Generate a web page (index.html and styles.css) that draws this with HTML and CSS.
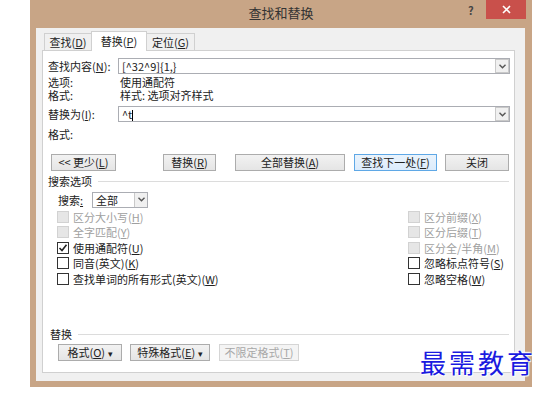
FILE: index.html
```html
<!DOCTYPE html>
<html lang="zh-CN">
<head>
    <meta charset="UTF-8">
    <title>查找和替换</title>
    <link rel="stylesheet" href="styles.css">
</head>
<body>
    <div class="window">
        <div class="titlebar">
            <span class="title">查找和替换</span>
            <span class="help">?</span>
            <span class="close">
                <svg width="9" height="9" viewBox="0 0 9 9"><path d="M1 1L8 8M8 1L1 8" stroke="#fff" stroke-width="1.6"/></svg>
            </span>
        </div>

        <div class="frame">
            <div class="tabs">
                <div class="tab tab-find">查找(<u>D</u>)</div>
                <div class="tab tab-replace active">替换(<u>P</u>)</div>
                <div class="tab tab-goto">定位(<u>G</u>)</div>
            </div>

            <div class="panel">
                <div class="field-row">
                    <label class="field-label">查找内容(<u>N</u>):</label>
                    <div class="combo">
                        <span class="combo-text">[^32^9]{1,}</span>
                        <span class="combo-btn"><svg width="7" height="5" viewBox="0 0 7 5"><path d="M0.5 0.8L3.5 3.8L6.5 0.8" fill="none" stroke="#555" stroke-width="1.4"/></svg></span>
                    </div>
                </div>
                <div class="info-row first-info"><span class="field-label">选项:</span><span class="info-val">使用通配符</span></div>
                <div class="info-row"><span class="field-label">格式:</span><span class="info-val">样式: 选项对齐样式</span></div>

                <div class="field-row replace-row">
                    <label class="field-label">替换为(<u>I</u>):</label>
                    <div class="combo">
                        <span class="combo-text">^t<span class="caret"></span></span>
                        <span class="combo-btn"><svg width="7" height="5" viewBox="0 0 7 5"><path d="M0.5 0.8L3.5 3.8L6.5 0.8" fill="none" stroke="#555" stroke-width="1.4"/></svg></span>
                    </div>
                </div>
                <div class="info-row format-row"><span class="field-label">格式:</span></div>

                <div class="button-row">
                    <button class="btn btn-less">&lt;&lt; 更少(<u>L</u>)</button>
                    <button class="btn btn-replace">替换(<u>R</u>)</button>
                    <button class="btn btn-all">全部替换(<u>A</u>)</button>
                    <button class="btn btn-next focus">查找下一处(<u>F</u>)</button>
                    <button class="btn btn-close">关闭</button>
                </div>

                <div class="group-title">搜索选项</div>

                <div class="search-row">
                    <span>搜索<u>:</u></span>
                    <div class="select">
                        <span class="select-text">全部</span>
                        <span class="select-btn"><svg width="7" height="5" viewBox="0 0 7 5"><path d="M0.5 0.8L3.5 3.8L6.5 0.8" fill="none" stroke="#555" stroke-width="1.4"/></svg></span>
                    </div>
                </div>

                <div class="options">
                    <div class="opt-col">
                        <div class="opt disabled"><span class="box"></span>区分大小写(<u>H</u>)</div>
                        <div class="opt disabled"><span class="box"></span>全字匹配(<u>Y</u>)</div>
                        <div class="opt"><span class="box checked"><svg width="10" height="10" viewBox="0 0 10 10"><path d="M1.5 5L4 7.5L8.5 1.8" fill="none" stroke="#222" stroke-width="1.6"/></svg></span>使用通配符(<u>U</u>)</div>
                        <div class="opt"><span class="box"></span>同音(英文)(<u>K</u>)</div>
                        <div class="opt"><span class="box"></span>查找单词的所有形式(英文)(<u>W</u>)</div>
                    </div>
                    <div class="opt-col">
                        <div class="opt disabled"><span class="box"></span>区分前缀(<u>X</u>)</div>
                        <div class="opt disabled"><span class="box"></span>区分后缀(<u>T</u>)</div>
                        <div class="opt disabled"><span class="box"></span>区分全/半角(<u>M</u>)</div>
                        <div class="opt"><span class="box"></span>忽略标点符号(<u>S</u>)</div>
                        <div class="opt"><span class="box"></span>忽略空格(<u>W</u>)</div>
                    </div>
                </div>

                <div class="group-title replace-title">替换</div>

                <div class="bottom-row">
                    <button class="btn btn-format">格式(<u>O</u>) <span class="tri">▾</span></button>
                    <button class="btn btn-special">特殊格式(<u>E</u>) <span class="tri">▾</span></button>
                    <button class="btn btn-nolimit" disabled>不限定格式(<u>T</u>)</button>
                </div>
            </div>
        </div>

        <div class="watermark">最需教育</div>
    </div>
</body>
</html>
```

FILE: styles.css
```css
body {
    margin: 0;
    background-color: #fff;
    font-family: "Noto Sans CJK SC", "Liberation Sans", sans-serif;
    font-size: 11px;
    color: #222;
}
u {
    text-decoration: underline;
}
.window {
    position: relative;
    width: 502px;
    height: 387px;
    margin-left: 30px;
    background-color: #c8a586;
    box-sizing: border-box;
    padding: 0 7px 6px 6px;
}
.titlebar {
    height: 28px;
    display: flex;
    align-items: flex-start;
    margin-right: -7px;
}
.title {
    flex: 1;
    text-align: center;
    font-size: 13px;
    line-height: 26px;
    color: #333;
    padding-left: 58px;
}
.help {
    width: 12px;
    font-size: 11px;
    font-weight: bold;
    color: #444;
    line-height: 20px;
    margin-right: 6px;
}
.close {
    width: 40px;
    height: 19px;
    background-color: #c9504b;
    display: flex;
    align-items: center;
    justify-content: center;
    margin-right: 6px;
}
.frame {
    height: 353px;
    background-color: #f0f0f0;
    box-sizing: border-box;
    padding: 3px 10px 0 6px;
}
.tabs {
    display: flex;
    align-items: flex-end;
    margin-left: 2px;
    height: 19px;
}
.tab {
    height: 17px;
    line-height: 16px;
    box-sizing: border-box;
    text-align: center;
    white-space: nowrap;
    border: 1px solid #d0d0d0;
    border-bottom: none;
    background-color: #f0f0f0;
    margin-right: -1px;
}
.tab-find {
    width: 48px;
}
.tab-replace {
    width: 56px;
}
.tab-goto {
    width: 49px;
}
.tab.active {
    height: 20px;
    line-height: 18px;
    background-color: #fff;
    position: relative;
    z-index: 1;
    margin-bottom: -1px;
}
.panel {
    height: 323px;
    background-color: #fff;
    border: 1px solid #d0d0d0;
    box-sizing: border-box;
    padding: 7px 4px 0 5px;
}
.field-row {
    display: flex;
    align-items: center;
    height: 16px;
}
.field-label {
    width: 70px;
    flex: none;
    white-space: nowrap;
}
.combo {
    flex: 1;
    height: 16px;
    box-sizing: border-box;
    border: 1px solid #abadb3;
    display: flex;
    align-items: center;
}
.combo-text {
    flex: 1;
    padding-left: 3px;
    line-height: 14px;
    font-size: 11px;
}
.caret {
    display: inline-block;
    width: 1px;
    height: 11px;
    background-color: #000;
    vertical-align: -2px;
}
.combo-btn {
    width: 14px;
    height: 14px;
    box-sizing: border-box;
    border: 1px solid #c9c9c9;
    background-color: #f0f0f0;
    display: flex;
    align-items: center;
    justify-content: center;
}
.info-row {
    display: flex;
    line-height: 13px;
}
.first-info {
    margin-top: 2px;
}
.info-val {
    padding-left: 2px;
}
.replace-row {
    margin-top: 4px;
}
.format-row {
    margin-top: 6px;
}
.button-row {
    display: flex;
    margin-top: 13px;
    padding-left: 3px;
}
.btn {
    font-family: "Noto Sans CJK SC", "Liberation Sans", sans-serif;
    font-size: 11px;
    color: #222;
    height: 17px;
    padding: 0;
    line-height: 15px;
    white-space: nowrap;
    border: 1px solid #acacac;
    background: linear-gradient(#f2f2f2, #e5e5e5);
    box-sizing: border-box;
}
.btn-less {
    width: 65px;
}
.btn-replace {
    width: 53px;
    margin-left: 47px;
}
.btn-all {
    width: 110px;
    margin-left: 19px;
}
.btn-next {
    width: 83px;
    margin-left: 9px;
}
.btn.focus {
    border-color: #5fa8e6;
    background: linear-gradient(#eaf3fc, #dcecfc);
}
.btn-close {
    width: 64px;
    margin-left: 8px;
}
.group-title {
    display: flex;
    align-items: center;
    line-height: 13px;
    margin-top: 4px;
}
.group-title::after {
    content: "";
    flex: 1;
    border-top: 1px solid #dcdcdc;
    margin-left: 6px;
    margin-right: 1px;
}
.search-row {
    display: flex;
    align-items: center;
    margin-top: 4px;
    padding-left: 10px;
    height: 15px;
}
.select {
    width: 56px;
    height: 16px;
    box-sizing: border-box;
    margin-left: 9px;
    border: 1px solid #abadb3;
    display: flex;
    align-items: center;
}
.select-text {
    flex: 1;
    padding-left: 3px;
    line-height: 14px;
}
.select-btn {
    width: 12px;
    height: 14px;
    border-left: 1px solid #c9c9c9;
    background-color: #f0f0f0;
    display: flex;
    align-items: center;
    justify-content: center;
}
.options {
    display: grid;
    grid-template-columns: 351px 1fr;
    margin-top: 2px;
    padding-left: 9px;
}
.opt {
    display: flex;
    align-items: center;
    height: 15.5px;
    white-space: nowrap;
}
.opt .box {
    width: 12px;
    height: 12px;
    box-sizing: border-box;
    border: 1px solid #333;
    background-color: #fff;
    margin-right: 4px;
    display: flex;
    align-items: center;
    justify-content: center;
}
.opt.disabled {
    color: #a0a0a0;
}
.opt.disabled .box {
    border-color: #d2d2d2;
    background-color: #e6e6e6;
}
.replace-title {
    margin-top: 41px;
    padding-left: 2px;
}
.bottom-row {
    display: flex;
    margin-top: 3px;
    padding-left: 10px;
}
.btn-format {
    width: 64px;
}
.btn-special {
    width: 80px;
    margin-left: 8px;
}
.btn-nolimit {
    width: 80px;
    margin-left: 9px;
    color: #a8a8a8;
    background: #f4f4f4;
    border-color: #d5d5d5;
}
.tri {
    font-size: 9px;
}
.watermark {
    position: absolute;
    left: 390px;
    top: 346px;
    font-size: 26px;
    letter-spacing: 3px;
    white-space: nowrap;
    color: #1a1ae0;
    line-height: 32px;
    text-shadow: 0 0 2px #fff, 0 0 2px #fff, 1px 1px 1px #fff, -1px -1px 1px #fff;
}
```
